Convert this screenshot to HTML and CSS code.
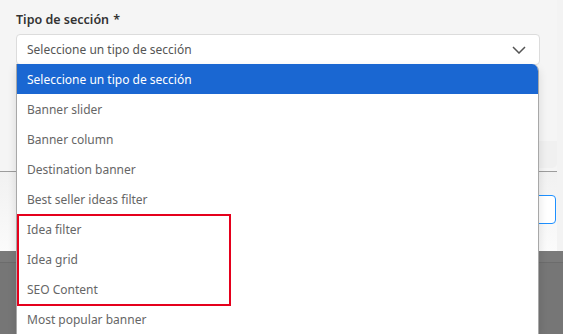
FILE: index.html
```html
<!DOCTYPE html>
<html>
<head>
    <meta charset="utf-8">
    <title>Tipo de sección</title>
    <link rel="stylesheet" href="styles.css">
</head>
<body>
    <div class="screen">
        <div class="modal">
            <div class="modal-body">
                <label class="field-label">Tipo de sección <span class="required">*</span></label>
                <div class="select">
                    <span>Seleccione un tipo de sección</span>
                    <svg class="chevron" width="14" height="8" viewBox="0 0 14 8">
                        <path d="M1 1l6 6 6-6" fill="none" stroke="#555" stroke-width="1.5"/>
                    </svg>
                </div>
                <div class="disabled-field"></div>
            </div>
            <div class="modal-footer">
                <button class="btn-outline">Cancelar</button>
            </div>
        </div>
        <div class="backdrop"></div>

        <ul class="dropdown">
            <li class="selected">Seleccione un tipo de sección</li>
            <li>Banner slider</li>
            <li>Banner column</li>
            <li>Destination banner</li>
            <li>Best seller ideas filter</li>
            <li>Idea filter</li>
            <li>Idea grid</li>
            <li>SEO Content</li>
            <li>Most popular banner</li>
        </ul>
        <div class="highlight"></div>
    </div>
</body>
</html>
```

FILE: styles.css
```css
body {
    margin: 0;
    font-family: "Noto Sans", "Open Sans", sans-serif;
    background-color: #f3f3f3;
    overflow: hidden;
}

.screen {
    position: relative;
    width: 563px;
    height: 334px;
    overflow: hidden;
}

.modal {
    width: 557px;
    background-color: #f5f5f5;
}

.modal-body {
    height: 172px;
    box-sizing: border-box;
    padding: 11px 17px 0 16px;
    border-bottom: 1px solid #9c9c9c;
    display: flex;
    flex-direction: column;
}

.field-label {
    font-size: 12.5px;
    font-weight: 600;
    color: #333;
    margin-bottom: 6px;
}

.required {
    margin-left: 1px;
}

.select {
    width: 524px;
    height: 31px;
    box-sizing: border-box;
    border: 1px solid #dcdcdc;
    border-radius: 4px;
    background-color: #fff;
    padding: 0 12px 0 10px;
    display: flex;
    align-items: center;
    justify-content: space-between;
    font-size: 12px;
    color: #555;
}

.chevron {
    margin-right: 1px;
}

.disabled-field {
    margin-top: 76px;
    margin-right: -17px;
    height: 27px;
    background-color: #f0f0f0;
    border-radius: 0 0 5px 0;
}

.modal-footer {
    height: 79px;
    box-sizing: border-box;
    background: linear-gradient(#f1f1f1, #fbfbfb);
    padding: 23px 1px 0 0;
    display: flex;
    justify-content: flex-end;
    align-items: flex-start;
}

.btn-outline {
    width: 110px;
    height: 29px;
    border: 1.5px solid #1e90ff;
    border-radius: 4px;
    background: #fff;
    color: #1e90ff;
    font-size: 13px;
}

.backdrop {
    height: 90px;
    background-color: #767676;
    border-top: 11px solid #7a7a7a;
    box-shadow: inset 0 1px 0 #6c6c6c;
}

.dropdown {
    position: absolute;
    left: 16px;
    top: 64px;
    width: 523px;
    box-sizing: border-box;
    margin: 0;
    padding: 0;
    list-style: none;
    background-color: #fff;
    border-left: 1px solid #a8a8a8;
    border-right: 1px solid #a8a8a8;
    border-top-right-radius: 7px;
    overflow: hidden;
    box-shadow: 0 4px 10px rgba(0, 0, 0, 0.12);
}

.dropdown li {
    height: 30px;
    box-sizing: border-box;
    padding: 1px 0 0 10px;
    display: flex;
    align-items: center;
    font-size: 12px;
    color: #666;
}

.dropdown li.selected {
    background-color: #1a67d2;
    color: #fff;
}

.highlight {
    position: absolute;
    left: 17px;
    top: 214px;
    width: 214px;
    height: 92px;
    box-sizing: border-box;
    border: 2px solid #e5001c;
}
```
